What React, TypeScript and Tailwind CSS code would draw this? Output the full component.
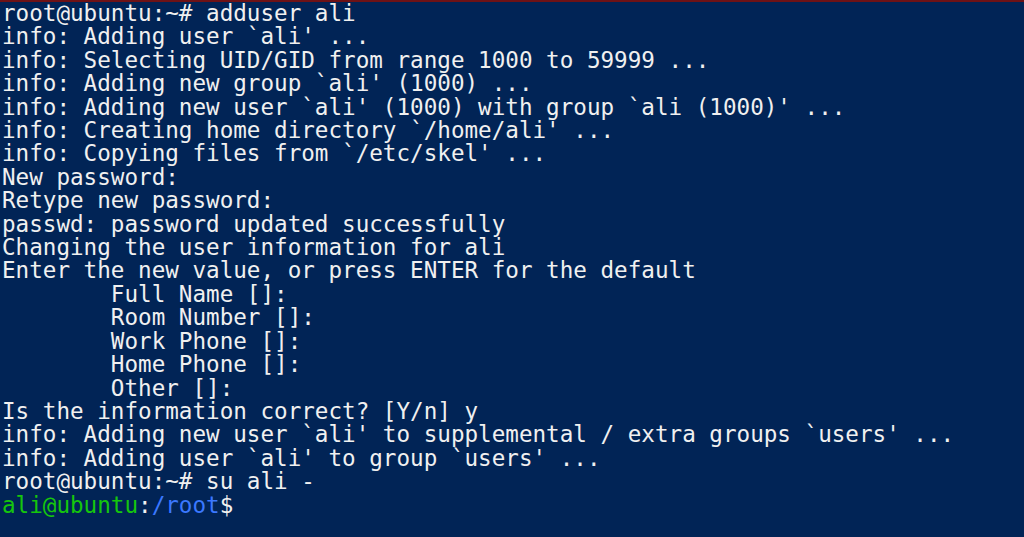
const lines: string[] = [
  "root@ubuntu:~# adduser ali",
  "info: Adding user `ali' ...",
  "info: Selecting UID/GID from range 1000 to 59999 ...",
  "info: Adding new group `ali' (1000) ...",
  "info: Adding new user `ali' (1000) with group `ali (1000)' ...",
  "info: Creating home directory `/home/ali' ...",
  "info: Copying files from `/etc/skel' ...",
  "New password:",
  "Retype new password:",
  "passwd: password updated successfully",
  "Changing the user information for ali",
  "Enter the new value, or press ENTER for the default",
  "        Full Name []:",
  "        Room Number []:",
  "        Work Phone []:",
  "        Home Phone []:",
  "        Other []:",
  "Is the information correct? [Y/n] y",
  "info: Adding new user `ali' to supplemental / extra groups `users' ...",
  "info: Adding user `ali' to group `users' ...",
  "root@ubuntu:~# su ali -",
];

export default function App() {
  return (
    <div className="w-[1024px] h-[537px] overflow-hidden bg-[#012456] border-t-2 border-[#6e1216]">
      <pre className="pl-[2px] pt-0 m-0 text-[22.6px] leading-[23.4px] text-[#f0f0f0] font-['DejaVu_Sans_Mono','Liberation_Mono',monospace] whitespace-pre">
        {lines.map((l, i) => (
          <div key={i}>{l}</div>
        ))}
        <div>
          <span className="text-[#16c60c]">ali@ubuntu</span>
          <span>:</span>
          <span className="text-[#3b78ff]">/root</span>
          <span>$</span>
        </div>
      </pre>
    </div>
  );
}
